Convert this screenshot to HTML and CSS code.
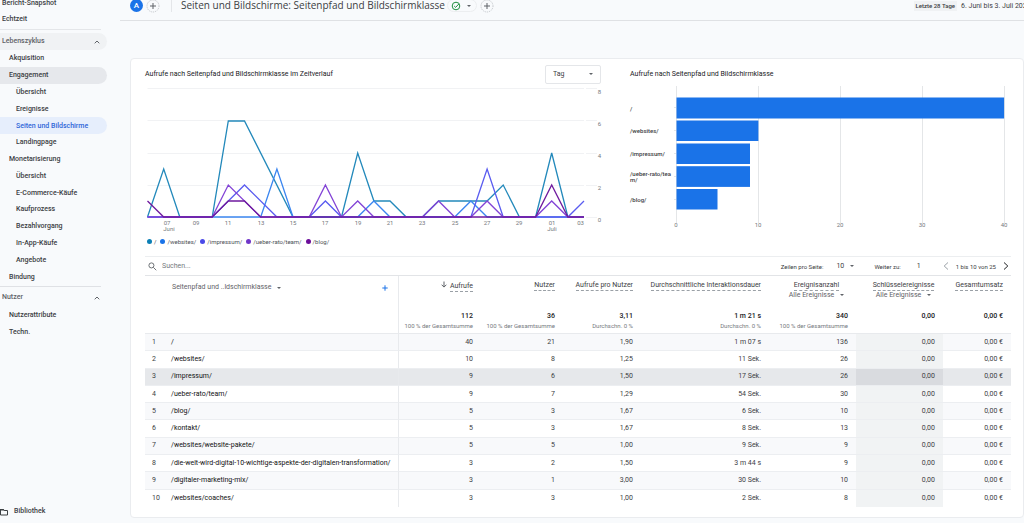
FILE: index.html
```html
<!DOCTYPE html>
<html lang="de">
<head>
<meta charset="utf-8">
<title>Seiten und Bildschirme</title>
<link rel="stylesheet" href="styles.css">
</head>
<body>
<div class="app">
  <nav class="sidebar">
    <div class="top-links">
      <a href="#">Bericht-Snapshot</a>
      <a href="#">Echtzeit</a>
    </div>
    <button class="section shaded" type="button">Lebenszyklus <svg class="chevron" viewBox="0 0 6 4"><path d="M.7 3.3 3 1l2.3 2.3"/></svg></button>
    <div class="tree">
      <a href="#" class="lvl1">Akquisition</a>
      <a href="#" class="lvl1 open">Engagement</a>
      <a href="#">Übersicht</a>
      <a href="#">Ereignisse</a>
      <a href="#" class="active">Seiten und Bildschirme</a>
      <a href="#">Landingpage</a>
      <a href="#" class="lvl1">Monetarisierung</a>
      <a href="#">Übersicht</a>
      <a href="#">E-Commerce-Käufe</a>
      <a href="#">Kaufprozess</a>
      <a href="#">Bezahlvorgang</a>
      <a href="#">In-App-Käufe</a>
      <a href="#">Angebote</a>
      <a href="#" class="lvl1">Bindung</a>
    </div>
    <button class="section ruled" type="button">Nutzer <svg class="chevron" viewBox="0 0 6 4"><path d="M.7 3.3 3 1l2.3 2.3"/></svg></button>
    <div class="tree short">
      <a href="#" class="lvl1">Nutzerattribute</a>
      <a href="#" class="lvl1">Techn.</a>
    </div>
    <a href="#" class="library"><svg class="folder" viewBox="0 0 9 8"><path d="M.5 1.5h2.8l.9 1H7.5v4.5H.5z"/><path class="fill" d="M0 1h3.6l1 1.5H0z"/></svg>Bibliothek</a>
  </nav>

  <main class="main">
    <header class="header">
      <span class="avatar">A</span>
      <button class="round" type="button" aria-label="Vergleich hinzufügen"><svg viewBox="0 0 14 14"><circle cx="7" cy="7" r="6"/><path d="M7 4v6M4 7h6"/></svg></button>
      <h1>Seiten und Bildschirme: Seitenpfad und Bildschirmklasse</h1>
      <button class="status" type="button" aria-label="Status"><svg class="check" viewBox="0 0 10 10"><circle cx="5" cy="5" r="3.8"/><path d="M3.200 5 4.600 6.400 7.800 3"/></svg><i class="caret"></i></button>
      <button class="round" type="button" aria-label="Hinzufügen"><svg viewBox="0 0 14 14"><circle cx="7" cy="7" r="6"/><path d="M7 4v6M4 7h6"/></svg></button>
      <div class="period"><span class="tag">Letzte 28 Tage</span><span class="dates">6. Juni bis 3. Juli 2024</span></div>
    </header>

    <section class="card">
      <div class="charts">
        <div class="chart">
          <div class="chart-head">
            <h2>Aufrufe nach Seitenpfad und Bildschirmklasse im Zeitverlauf</h2>
            <select class="interval" aria-label="Intervall"><option>Tag</option></select>
          </div>
          <svg class="plot" viewBox="0 0 456 149">
            <path class="grid" d="M2.5 4.5h436.500M441 4.500h11M2.500 36.500h436.500M441 36.500h11M2.500 69.500h436.500M441 69.500h11M2.500 101.500h436.500M441 101.500h11M2.500 133.500h436.500M441 133.500h11"/>
            <g class="axis">
              <text x="456" y="10">8</text><text x="456" y="42">6</text><text x="456" y="74">4</text><text x="456" y="106">2</text><text x="456" y="138">0</text>
              <text x="439" y="141">03</text>
            </g>
            <g class="axis mid">
              <text x="22" y="141">07</text><text x="24" y="147">Juni</text><text x="51" y="141">09</text><text x="83" y="141">11</text><text x="116" y="141">13</text><text x="148" y="141">15</text><text x="180" y="141">17</text><text x="213" y="141">19</text><text x="245" y="141">21</text><text x="277" y="141">23</text><text x="310" y="141">25</text><text x="342" y="141">27</text><text x="374" y="141">29</text><text x="407" y="141">01</text><text x="407" y="147">Juli</text>
            </g>
            <g class="lines">
              <polyline class="s1" points="2.5,133 18.7,85 34.8,133 67.2,133 83.3,37 99.5,37 148,133 196.5,133 212.7,69 228.9,117 245,117 261.2,133 277.4,133 293.6,117 342.1,117 358.2,101 374.4,133 390.6,133 406.7,69 422.9,133 439,133"/>
              <polyline class="s2" points="2.5,133 115.7,133 131.9,85 148,133 212.7,133 228.9,117 245,133 309.7,133 325.9,117 342.1,133 439,133"/>
              <polyline class="s3" points="2.5,133 67.2,133 83.3,117 99.5,101 131.9,133 164.2,133 180.4,117 196.5,133 325.9,133 342.1,85 358.2,133 422.9,133 439,117"/>
              <polyline class="s4" points="2.5,133 67.2,133 83.3,101 115.7,133 164.2,133 180.4,101 196.5,133 212.7,117 228.9,133 277.4,133 293.6,117 309.7,133 325.9,133 342.1,117 358.2,133 390.6,133 406.7,117 422.9,133 439,133"/>
              <polyline class="s5" points="2.5,117 18.7,133 67.2,133 83.3,117 99.5,117 115.7,133 390.6,133 406.7,101 422.9,133 439,133"/>
            </g>
          </svg>
          <ul class="legend">
            <li class="k1"><span>/</span></li><li class="k2"><span>/websites/</span></li><li class="k3"><span>/impressum/</span></li><li class="k4"><span>/ueber-rato/team/</span></li><li class="k5"><span>/blog/</span></li>
          </ul>
        </div>
        <div class="chart bars">
          <div class="chart-head"><h2>Aufrufe nach Seitenpfad und Bildschirmklasse</h2></div>
          <svg class="plot" viewBox="0 0 381 149">
            <path class="grid dark" d="M46.500 2v137M128.500 2v137M210.500 2v137M292.500 2v137M374.500 2v137M44 23.500h2M44 46.500h2M44 69.500h2M44 92.500h2M44 115.500h2"/>
            <g class="bar">
              <rect x="46.500" y="13.500" width="327.600" height="21"/><rect x="46.500" y="36.500" width="81.900" height="20.500"/><rect x="46.500" y="59.500" width="73.500" height="20.500"/><rect x="46.500" y="82.200" width="73.500" height="20.700"/><rect x="46.500" y="105" width="41" height="20.500"/>
            </g>
            <g class="names">
              <text x="0" y="27">/</text><text x="0" y="49">/websites/</text><text x="0" y="72">/impressum/</text><text x="0" y="92">/ueber-rato/tea</text><text x="0" y="98">m/</text><text x="0" y="118">/blog/</text>
            </g>
            <g class="axis mid">
              <text x="46" y="143">0</text><text x="128" y="143">10</text><text x="210" y="143">20</text><text x="292" y="143">30</text><text x="374" y="143">40</text>
            </g>
          </svg>
        </div>
      </div>

      <div class="toolbar">
        <label class="search"><svg viewBox="0 0 10 10"><circle cx="3.800" cy="3.800" r="2.800"/><path d="m6 6 3.200 3.200"/></svg><input type="text" placeholder="Suchen..." aria-label="Suchen"></label>
        <label class="rows-per">Zeilen pro Seite:<select><option>10</option></select></label>
        <label class="goto">Weiter zu:<input type="text" value="1"></label>
        <div class="pager">
          <button type="button" aria-label="Zurück" class="prev"><svg viewBox="0 0 6 8"><path d="M5 .5 1.200 4 5 7.500"/></svg></button>
          <span>1 bis 10 von 25</span>
          <button type="button" aria-label="Weiter"><svg viewBox="0 0 6 8"><path d="M1 .5 4.800 4 1 7.500"/></svg></button>
        </div>
      </div>

      <table class="data">
        <colgroup><col class="c-num"><col><col class="c-82"><col class="c-82"><col class="c-78"><col class="c-128"><col class="c-87"><col class="c-87"><col class="c-68"></colgroup>
        <thead>
          <tr class="names-row">
            <th colspan="2" class="dim"><div class="dim-box"><span>Seitenpfad und ..ldschirmklasse</span><i class="caret"></i><button type="button" class="plus" aria-label="Dimension hinzufügen"><svg viewBox="0 0 6 6"><path d="M3 .3v5.400M.3 3h5.400"/></svg></button></div></th>
            <th><svg class="sort" viewBox="0 0 6 7"><path d="M3 .5v5.500M.6 3.700 3 6.100 5.400 3.700"/></svg><span class="metric">Aufrufe</span></th>
            <th><span class="metric">Nutzer</span></th>
            <th><span class="metric">Aufrufe pro Nutzer</span></th>
            <th><span class="metric">Durchschnittliche Interaktionsdauer</span></th>
            <th class="filter"><span class="metric">Ereignisanzahl</span><button type="button">Alle Ereignisse<i class="caret"></i></button></th>
            <th class="filter"><span class="metric">Schlüsselereignisse</span><button type="button">Alle Ereignisse<i class="caret"></i></button></th>
            <th><span class="metric">Gesamtumsatz</span></th>
          </tr>
          <tr class="totals">
            <td></td><td class="path"></td>
            <td><b>112</b><small>100 % der Gesamtsumme</small></td>
            <td><b>36</b><small>100 % der Gesamtsumme</small></td>
            <td><b>3,11</b><small>Durchschn. 0 %</small></td>
            <td><b>1 m 21 s</b><small>Durchschn. 0 %</small></td>
            <td><b>340</b><small>100 % der Gesamtsumme</small></td>
            <td><b>0,00</b></td>
            <td><b>0,00 €</b></td>
          </tr>
        </thead>
        <tbody>
          <tr><td>1</td><td class="path">/</td><td>40</td><td>21</td><td>1,90</td><td>1 m 07 s</td><td>136</td><td class="key">0,00</td><td>0,00 €</td></tr>
          <tr><td>2</td><td class="path">/websites/</td><td>10</td><td>8</td><td>1,25</td><td>11 Sek.</td><td>26</td><td class="key">0,00</td><td>0,00 €</td></tr>
          <tr class="hover"><td>3</td><td class="path">/impressum/</td><td>9</td><td>6</td><td>1,50</td><td>17 Sek.</td><td>26</td><td class="key">0,00</td><td>0,00 €</td></tr>
          <tr><td>4</td><td class="path">/ueber-rato/team/</td><td>9</td><td>7</td><td>1,29</td><td>54 Sek.</td><td>30</td><td class="key">0,00</td><td>0,00 €</td></tr>
          <tr><td>5</td><td class="path">/blog/</td><td>5</td><td>3</td><td>1,67</td><td>6 Sek.</td><td>10</td><td class="key">0,00</td><td>0,00 €</td></tr>
          <tr><td>6</td><td class="path">/kontakt/</td><td>5</td><td>3</td><td>1,67</td><td>8 Sek.</td><td>13</td><td class="key">0,00</td><td>0,00 €</td></tr>
          <tr><td>7</td><td class="path">/websites/website-pakete/</td><td>5</td><td>5</td><td>1,00</td><td>9 Sek.</td><td>9</td><td class="key">0,00</td><td>0,00 €</td></tr>
          <tr><td>8</td><td class="path">/die-welt-wird-digital-10-wichtige-aspekte-der-digitalen-transformation/</td><td>3</td><td>2</td><td>1,50</td><td>3 m 44 s</td><td>9</td><td class="key">0,00</td><td>0,00 €</td></tr>
          <tr><td>9</td><td class="path">/digitaler-marketing-mix/</td><td>3</td><td>1</td><td>3,00</td><td>30 Sek.</td><td>10</td><td class="key">0,00</td><td>0,00 €</td></tr>
          <tr><td>10</td><td class="path">/websites/coaches/</td><td>3</td><td>3</td><td>1,00</td><td>2 Sek.</td><td>8</td><td class="key">0,00</td><td>0,00 €</td></tr>
        </tbody>
      </table>
    </section>
  </main>
</div>
</body>
</html>
```
FILE: styles.css
```css
* { box-sizing: border-box; }
body { margin: 0; background: #f8fafc; color: #3c4043; font: 7px/9px Roboto, sans-serif; overflow: hidden; }
button, input, select { font: inherit; color: inherit; border: 0; padding: 0; margin: 0; background: none; outline: 0; }
a { color: inherit; text-decoration: none; }
h1, h2, ul { margin: 0; padding: 0; font-weight: 400; }
svg { fill: none; stroke: currentColor; display: block; }
.app { display: flex; min-height: 100vh; }

.sidebar { width: 120px; flex: none; display: flex; flex-direction: column; height: 100vh; font-weight: 500; }
.top-links { display: grid; gap: 7px; width: 101px; height: 30px; padding-left: 2px; align-content: end; padding-bottom: 5px; border-bottom: 1px solid #e4e6e9; }
.section { display: flex; align-items: center; justify-content: space-between; width: 107px; height: 17px; margin-top: 3px; padding: 0 7px 0 2px; border-radius: 0 9px 9px 0; color: #5f6368; text-align: left; }
.shaded { background: #f0f2f4; }
.ruled { position: relative; margin-top: 4px; }
.ruled::before { content: ""; position: absolute; left: 0; top: -3px; width: 101px; height: 1px; background: #dfe1e5; }
.chevron { width: 6px; height: 4px; }
.tree { display: grid; grid-template-rows: repeat(14, 1fr); height: 235px; width: 107px; }
.tree.short { grid-template-rows: repeat(2, 1fr); height: 34px; }
.tree a { display: flex; align-items: center; padding-left: 16px; border-radius: 0 9px 9px 0; white-space: nowrap; line-height: 10px; }
.tree .lvl1 { padding-left: 9px; }
.tree .open { background: #e6e8ec; }
.tree .active { background: #e6eefc; color: #2f66d8; }
.library { display: flex; gap: 5px; align-items: center; margin-top: auto; padding-bottom: 7px; }
.folder { width: 9px; height: 8px; stroke-width: 1; }
.folder .fill { fill: currentColor; stroke: none; }

.main { flex: 1; min-width: 0; }
.header { display: flex; align-items: center; height: 21px; padding: 0 0 9px 10px; border-bottom: 1px solid #dfe1e4; white-space: nowrap; }
.avatar { width: 13px; height: 13px; border-radius: 50%; background: #1a73e8; color: #fff; text-align: center; font: 500 8px/13px Roboto, sans-serif; }
.round { width: 14px; height: 14px; margin-left: 3px; color: #5f6368; }
.round circle { stroke: #bdc1c6; stroke-width: 1; stroke-dasharray: 1 1; }
h1 { font: 10px/13px "Open Sans", sans-serif; border-left: 1px solid #e4e6e9; margin-left: 11px; padding-left: 9px; }
.status { display: flex; align-items: center; gap: 6px; margin-left: 2px; padding: 0 5px 0 3px; height: 13px; border: 1px solid #eceef0; border-radius: 7px; color: #5f6368; }
.check { width: 10px; height: 10px; color: #1e8e3e; }
.caret { display: inline-block; width: 0; height: 0; border: 2px solid transparent; border-top-color: currentColor; border-bottom: 0; flex: none; }
.period { margin-left: auto; display: flex; gap: 4px; align-items: center; line-height: 10px; }
.tag { background: #f0f2f4; padding: 0 2px; font-size: 6px; font-weight: 500; }
.dates { width: 63px; }

.card { margin: 37px 0 6px 10px; padding: 5px 12px 10px 14px; background: #fff; border: 1px solid #eaecef; border-radius: 4px; }
.charts { display: grid; grid-template-columns: 456fr 381fr; gap: 29px; }
.chart-head { display: flex; align-items: center; justify-content: space-between; height: 20px; }
h2 { font: 7px/10px Roboto, sans-serif; color: #202124; white-space: nowrap; }
select { appearance: none; }
.interval, .rows-per select { background: url("data:image/svg+xml,%3Csvg xmlns='http://www.w3.org/2000/svg' viewBox='0 0 4 2'%3E%3Cpath d='M0 0h4L2 2z' fill='%235f6368'/%3E%3C/svg%3E") no-repeat right 7px center / 4px 2px; }
.interval { width: 56px; height: 19px; padding-left: 7px; border: 1px solid #e4e6e9; border-radius: 2px; }
.plot { width: 100%; height: auto; overflow: visible; }
.grid { stroke: #f1f2f4; }
.grid.dark { stroke: #e4e6e8; }
.axis text { font-size: 6px; fill: #75797e; stroke: none; text-anchor: end; }
.axis.mid text { text-anchor: middle; }
.lines { stroke-width: 1.3; }
.s1 { stroke: #2389bb; }
.s2 { stroke: #3b86f0; }
.s3 { stroke: #5a5cf0; }
.s4 { stroke: #8344d6; }
.s5 { stroke: #6f1a9e; }
.bar rect { fill: #1a73e8; stroke: none; }
.names text { font-size: 6px; font-weight: 500; fill: #3c4043; stroke: none; }
.legend { display: flex; gap: 4px; height: 14px; padding: 2px 0 0 2px; list-style: none; font-size: 6px; }
.legend li { display: flex; align-items: center; gap: 2px; }
.legend li::before { content: ""; width: 5px; height: 5px; border-radius: 50%; background: currentColor; }
.legend span { color: #4d5156; }
.k1 { color: #0b7fb5; }
.k2 { color: #1a73e8; }
.k3 { color: #4a4ae8; }
.k4 { color: #7036c9; }
.k5 { color: #6b0e9a; }

.toolbar { display: flex; align-items: center; height: 20px; margin-top: 9px; border-top: 1px solid #eceef0; border-bottom: 1px solid #e2e4e7; color: #5f6368; font-size: 6px; }
.search { display: flex; align-items: center; gap: 5px; flex: 1; padding-left: 3px; font-size: 7px; }
.search svg { width: 9px; height: 9px; }
.search input { flex: 1; }
.search input::placeholder { color: #75797e; }
.rows-per { display: flex; gap: 13px; color: #3c4043; }
.rows-per select { width: 18px; font-size: 7px; background-position: right center; }
.goto { display: flex; gap: 16px; margin-left: 20px; color: #3c4043; }
.goto input { width: 20px; font-size: 7px; }
.pager { display: flex; align-items: center; gap: 7px; margin: 0 2px 0 6px; color: #3c4043; }
.pager button { width: 6px; height: 8px; color: #202124; }
.pager .prev { color: #9aa0a6; }

.data { width: 100%; height: 231px; table-layout: fixed; border-collapse: separate; border-spacing: 0; }
.c-num { width: 26px; }
.c-82 { width: 82px; }
.c-78 { width: 78px; }
.c-128 { width: 128px; }
.c-87 { width: 87px; }
.c-68 { width: 68px; }
th, td { padding: 0 8px 0 0; text-align: right; white-space: nowrap; font-weight: 400; }
td:first-child { text-align: left; padding-left: 7px; padding-right: 0; }
.names-row { height: 30px; }
.names-row th { vertical-align: top; padding-top: 5px; color: #5f6368; }
.metric { display: inline-block; color: #3c4043; border-bottom: 1px dashed #9aa0a6; }
.sort { display: inline-block; width: 6px; height: 7px; margin-right: 3px; }
.dim, .path { border-right: 1px solid #e8eaed; }
.dim-box { display: flex; align-items: center; gap: 6px; padding: 2px 2px 0 27px; }
.plus { width: 6px; height: 6px; margin-left: auto; color: #1a73e8; }
.names-row .filter { padding: 5px 0 0 8px; text-align: center; }
.filter .metric { display: table; margin: 0 auto; }
.filter button { display: block; margin: 0 auto; color: #5f6368; }
.filter .caret { margin: 0 0 1px 6px; }
.totals { height: 28px; }
.totals td { vertical-align: top; padding-top: 6px; border-bottom: 1px solid #e8eaed; }
.totals b { display: block; font-weight: 500; color: #202124; }
.totals small { display: block; font-size: 6px; line-height: 10px; color: #75797e; }
tbody tr { height: 17px; }
tbody td { border-bottom: 1px solid #eceef1; }
tbody tr:last-child td { border-bottom: 0; }
tbody tr:nth-child(odd) { background: #f8f9fb; }
tbody .path { text-align: left; color: #111; padding-right: 0; }
td.key { background: #f1f3f4; }
tbody tr.hover { background: #e6e8eb; }
.hover td.key { background: #d9dbdf; }
```
